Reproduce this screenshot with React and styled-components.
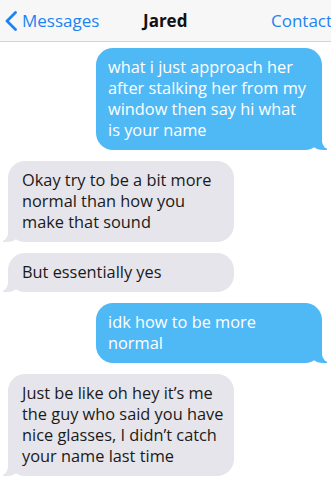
import React from "react";
import styled, { createGlobalStyle } from "styled-components";

const GlobalStyle = createGlobalStyle`
  html, body {
    margin: 0;
    padding: 0;
    background: #ffffff;
    overflow: hidden;
  }
  body {
    font-family: "Open Sans", "Liberation Sans", sans-serif;
  }
`;

const Screen = styled.div`
  width: 331px;
  height: 489px;
  overflow: hidden;
  background: #ffffff;
  display: flex;
  flex-direction: column;
`;

const NavBar = styled.header`
  height: 41px;
  flex: 0 0 auto;
  background: #f7f7f7;
  border-bottom: 1px solid #d4d4d4;
  display: flex;
  align-items: center;
  font-size: 17px;
`;

const BackButton = styled.div`
  display: flex;
  align-items: center;
  gap: 5px;
  padding-left: 5px;
  color: #1b84f2;
  width: 138px;
`;

const Title = styled.div`
  flex: 1;
  font-weight: 700;
  color: #111;
`;

const RightButton = styled.div`
  width: 60px;
  white-space: nowrap;
  color: #1b84f2;
`;

const Thread = styled.div`
  display: flex;
  flex-direction: column;
  gap: 11px;
  padding: 6px 0 0;
`;

const Bubble = styled.div`
  position: relative;
  width: 226px;
  box-sizing: border-box;
  padding: ${(p) => (p.$me ? "9px 13px 9px 12px" : "9px 10px 9px 14px")};
  border-radius: 17px;
  font-size: 16.35px;
  line-height: 21px;
  align-self: ${(p) => (p.$me ? "flex-end" : "flex-start")};
  margin: ${(p) => (p.$me ? "0 9px 0 0" : "0 0 0 8px")};
  background: ${(p) => (p.$me ? "#4fb9f6" : "#e6e5eb")};
  color: ${(p) => (p.$me ? "#ffffff" : "#1a1a1a")};

  &::before {
    content: "";
    position: absolute;
    bottom: 0;
    height: 18px;
    width: 18px;
    background: ${(p) => (p.$me ? "#4fb9f6" : "#e6e5eb")};
    ${(p) =>
      p.$me
        ? "right: -5px; border-bottom-left-radius: 14px 12px;"
        : "left: -5px; border-bottom-right-radius: 14px 12px;"}
  }
  &::after {
    content: "";
    position: absolute;
    bottom: 0;
    height: 18px;
    width: 14px;
    background: #ffffff;
    ${(p) =>
      p.$me
        ? "right: -14px; border-bottom-left-radius: 9px;"
        : "left: -14px; border-bottom-right-radius: 9px;"}
  }
`;

const Chevron = () => (
  <svg width="12" height="20" viewBox="0 0 12 20" aria-hidden="true">
    <path
      d="M10.5 1.5 L2 10 L10.5 18.5"
      fill="none"
      stroke="#1b84f2"
      strokeWidth="2.8"
      strokeLinecap="round"
      strokeLinejoin="round"
    />
  </svg>
);

const messages = [
  { me: true, text: "what i just approach her after stalking her from my window then say hi what is your name" },
  { me: false, text: "Okay try to be a bit more normal than how you make that sound" },
  { me: false, text: "But essentially yes" },
  { me: true, text: "idk how to be more normal" },
  { me: false, text: "Just be like oh hey it\u2019s me the guy who said you have nice glasses, I didn\u2019t catch your name last time" },
];

export default function App() {
  return (
    <>
      <GlobalStyle />
      <Screen>
        <NavBar>
          <BackButton>
            <Chevron />
            <span>Messages</span>
          </BackButton>
          <Title>Jared</Title>
          <RightButton>Contact</RightButton>
        </NavBar>
        <Thread>
          {messages.map((m, i) => (
            <Bubble key={i} $me={m.me}>
              {m.text}
            </Bubble>
          ))}
        </Thread>
      </Screen>
    </>
  );
}
